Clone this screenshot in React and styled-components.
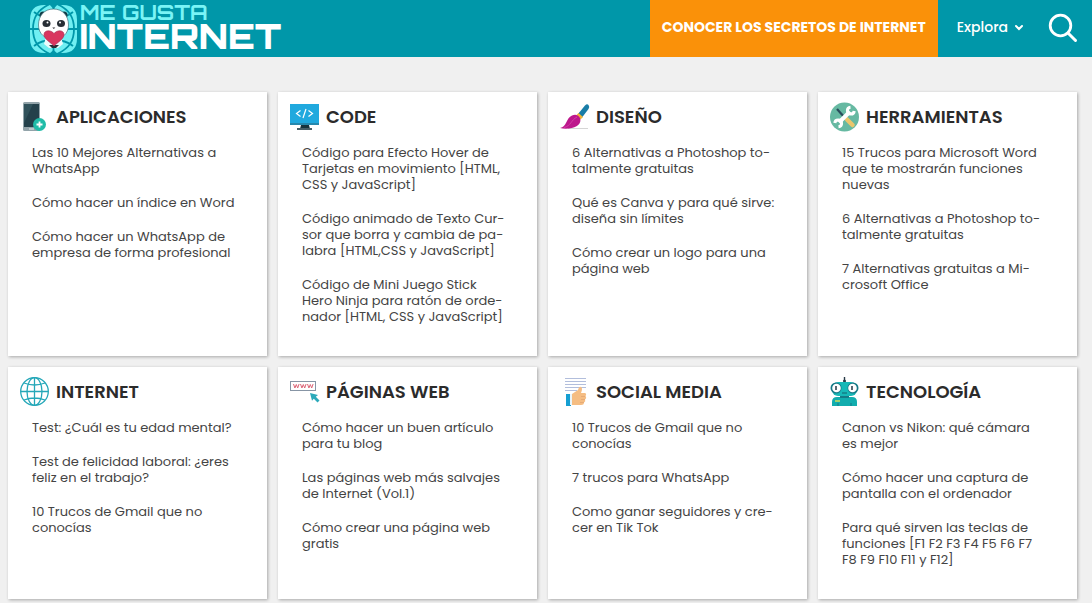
import React from 'react';
import styled, { createGlobalStyle } from 'styled-components';

const GlobalStyle = createGlobalStyle`
    body {
        margin: 0;
        background-color: #f0f0f0;
        color: #333333;
        font-family: Poppins, Inter, "Open Sans", sans-serif;
    }
`;

const Header = styled.header`
    display: flex;
    align-items: stretch;
    min-height: 57px;
    background-color: #0097a9;
`;

const Logo = styled.a`
    display: flex;
    align-items: center;
    gap: 2px;
    margin-right: auto;
    padding-left: 29px;
    text-decoration: none;
`;

const LogoText = styled.span`
    display: flex;
    flex-direction: column;
    padding-bottom: 6px;
    font-family: Orbitron, "DejaVu Sans", sans-serif;
`;

const LogoTop = styled.span`
    color: #7af4f6;
    font-size: 21px;
    font-weight: 700;
    line-height: 20px;
`;

const LogoBottom = styled.span`
    color: white;
    font-size: 35px;
    font-weight: 900;
    line-height: 28px;
`;

const Nav = styled.nav`
    display: flex;
    align-items: stretch;
`;

const PromoLink = styled.a`
    display: flex;
    align-items: center;
    padding: 0 12px 2px;
    background-color: #fa9109;
    color: white;
    font-size: 14px;
    font-weight: 700;
    text-decoration: none;
    white-space: nowrap;
`;

const MenuButton = styled.button`
    display: flex;
    align-items: center;
    gap: 6px;
    padding: 0 18px 2px 19px;
    border: none;
    background: none;
    color: white;
    font-family: inherit;
    font-size: 14px;
    font-weight: 500;
    cursor: pointer;
`;

const SearchButton = styled.button`
    display: flex;
    align-items: center;
    padding: 0 14px 2px 6px;
    border: none;
    background: none;
    cursor: pointer;
`;

const Grid = styled.main`
    display: grid;
    grid-template-columns: repeat(4, minmax(0, 1fr));
    gap: 11px;
    padding: 35px 15px 4px 8px;
`;

const Card = styled.section`
    box-sizing: border-box;
    padding: 9px 12px 31px;
    background-color: white;
    box-shadow: 1px 1px 3px rgba(0, 0, 0, 0.3);
`;

const CardHeader = styled.div`
    display: flex;
    align-items: center;
    gap: 6px;
    height: 32px;
`;

const CardTitle = styled.h2`
    margin: 0;
    color: #2b2b2b;
    font-size: 18px;
    font-weight: 600;
    line-height: 24px;
`;

const LinkList = styled.ul`
    display: flex;
    flex-direction: column;
    gap: 18px;
    margin: 12px 0 0;
    padding: 0 0 0 12px;
    list-style: none;
`;

const ListLink = styled.a`
    display: block;
    color: #444444;
    font-size: 13px;
    font-weight: 400;
    line-height: 16px;
    text-decoration: none;
    white-space: pre-line;
`;

const PandaLogo = () => (
    <svg width="49" height="50" viewBox="0 0 49 50" aria-hidden="true">
        <path d="M15 1H34Q48 1 48 16V34Q48 49 34 49H15Q1 49 1 34V16Q1 1 15 1Z" fill="#70eff2" />
        <g fill="none" stroke="#0097a9" strokeWidth="1.8">
            <path d="M21 0C8 6 4 14 4 25S8 44 21 50M28 0C41 6 45 14 45 25S41 44 28 50" />
            <path d="M5 8Q12 14 24.5 14T44 8M5 42Q12 36 24.5 36T44 42M0 25h49M24.5 0v50" />
        </g>
        <path d="M20 0h9l-4.5 5zM20 50h9l-4.5-4z" fill="#0097a9" />
        <circle cx="14" cy="11" r="3.5" fill="#123c46" />
        <circle cx="35" cy="11" r="3.5" fill="#123c46" />
        <path d="M24.5 5C34 5 39.5 12 39.5 21C39.5 30 33 35 24.5 35C16 35 9.5 30 9.5 21C9.5 12 15 5 24.5 5Z" fill="white" stroke="#416e78" strokeWidth=".7" />
        <path d="M17 33h15l2 7-5 4h-9l-5-4z" fill="#e9fbfc" />
        <ellipse cx="17.5" cy="19.5" rx="4" ry="3.5" fill="#272e35" />
        <ellipse cx="32" cy="19.5" rx="4" ry="3.5" fill="#272e35" />
        <circle cx="18.5" cy="18.5" r="1" fill="white" />
        <circle cx="31" cy="18.5" r="1" fill="white" />
        <path d="M23.3 23.5h3l-1.5 1.6z" fill="#34343a" />
        <path d="M20 41l3 3h4l3-3z" fill="#272e35" />
        <path d="M25 42C21 38 15 35 15 30.5C15 26 22 25.5 25 29.5C28 25.5 35 26 35 30.5C35 35 29 38 25 42Z" fill="#d9365f" stroke="#a52d53" strokeWidth=".6" />
    </svg>
);

const PhoneIcon = () => (
    <>
        <rect x="3" y="1" width="17" height="29" rx="1.5" fill="#93a4aa" />
        <rect x="4" y="3" width="15" height="23" fill="#24414b" />
        <path d="M4 3h9l-9 19z" fill="#31525b" />
        <path d="M9 28h5" stroke="#e5eded" />
        <circle cx="19.5" cy="23.5" r="6.5" fill="#20bca8" />
        <path d="M19.5 20.5v6M16.5 23.5h6" stroke="white" strokeWidth="1.8" />
    </>
);

const CodeIcon = () => (
    <>
        <path d="M11 24h8l1 4h-10z" fill="#16333d" />
        <path d="M7 27h15v2H7z" fill="#485f67" />
        <rect x="0" y="3" width="29" height="21" fill="#20a9de" />
        <path d="M0 22h29v2H0z" fill="#2688ad" />
        <path d="M10.5 9.5l-4 3 4 3M18.5 9.5l4 3-4 3M16 8l-3 9" fill="none" stroke="white" strokeWidth="1.2" />
    </>
);

const BrushIcon = () => (
    <>
        <path d="M8 27.5h20" stroke="#d5d5d5" />
        <path d="M18 13L25 4.5Q27 2.5 28.5 4Q30 6 28.5 8L22 16.5Z" fill="#197da7" />
        <path d="M16.5 14l2-2 4.5 4-2.5 2.5z" fill="#efb535" />
        <path d="M0 27C7 26 6 17 12 14.5C15 13 18 13.5 20 17C22 22 17 27 9 27.5Q4 28 0 27Z" fill="#bd178c" />
        <path d="M4 26.5C11 25 11 19 17 16" fill="none" stroke="#d33ca5" />
    </>
);

const ToolsIcon = () => (
    <>
        <circle cx="14.5" cy="16" r="14.5" fill="#66b9a2" />
        <path d="M7 8l8 9" stroke="#294c5c" strokeWidth="2.2" />
        <path d="M17 18.5l5.5 5.5" stroke="#eac66d" strokeWidth="4.5" strokeLinecap="round" />
        <path d="M9 21.5L20 10.5" stroke="white" strokeWidth="4" />
        <path d="M20.5 6.3A3.4 3.4 0 1 0 24.2 10M4.8 22A3.4 3.4 0 1 1 8.5 25.7" fill="none" stroke="white" strokeWidth="3" />
    </>
);

const GlobeIcon = () => (
    <g fill="none" stroke="#24a7b8" strokeWidth="1.3">
        <circle cx="14.5" cy="15.5" r="13.8" />
        <ellipse cx="14.5" cy="15.5" rx="7.5" ry="13.8" />
        <path d="M14.5 1.7v27.6M.7 15.5h27.6M4 7Q14.5 11 25 7M4 24Q14.5 20 25 24" />
    </g>
);

const WwwIcon = () => (
    <>
        <rect x=".5" y="5.5" width="25" height="9" fill="white" stroke="#8795a5" />
        <path d="M3.5 8l1.4 4 1.4-3.5L7.7 12l1.4-4M10.5 8l1.4 4 1.4-3.5 1.4 3.5 1.4-4M17.5 8l1.4 4 1.4-3.5 1.4 3.5 1.4-4" fill="none" stroke="#dc6577" />
        <path d="M20 17l8 2-2.2 1.8 3.7 3.7-2 2-3.7-3.7-1.8 2z" fill="#2ba9ba" />
    </>
);

const LikeIcon = () => (
    <>
        <g stroke="#b2bedc" strokeWidth="1.2">
            <path d="M5 2.5h21M5 5.5h21M5 8.5h21M5 11.5h21M5 14.5h12" />
        </g>
        <path d="M6 18h5v12H6z" fill="#159fd2" />
        <path d="M10 18h2v11h-2z" fill="#e9f5fb" />
        <path d="M12 18L18 14Q19 10 21 11Q23 12 21 17H25Q27 18 25.5 20Q27 22 25 23.5Q26 25.5 24 26.5Q24 29 21 29H12Z" fill="#f5bd83" />
        <path d="M21 20.5h4M21 23.5h4M20 26.5h4" stroke="#dda06d" strokeWidth=".6" />
    </>
);

const RobotIcon = () => (
    <>
        <path d="M14.5 1v6" stroke="#273946" strokeWidth="1.4" />
        <circle cx="14.5" cy="5" r="1.5" fill="#273946" />
        <path d="M2 30v-4Q2 21 7 21H22Q27 21 27 26v4z" fill="#12adae" />
        <path d="M10 18h9v4h-9z" fill="#147b86" />
        <rect x="2" y="6" width="25" height="14" rx="6" fill="#17b8b7" />
        <g fill="#167886">
            <circle cx="6" cy="12" r="5.5" />
            <circle cx="23" cy="12" r="5.5" />
        </g>
        <g fill="white">
            <circle cx="6.5" cy="12" r="4.3" />
            <circle cx="22.5" cy="12" r="4.3" />
        </g>
        <path d="M6 10v4M22 10v4" stroke="#253745" strokeWidth="1.5" />
        <path d="M12 17h5" stroke="#126571" />
        <path d="M5 25h5" stroke="#cfdf58" strokeWidth="1.5" />
        <path d="M8 27v3M21 27v3" stroke="#167886" />
    </>
);

const categories = [
    {
        title: 'APLICACIONES',
        Icon: PhoneIcon,
        links: [
            'Las 10 Mejores Alternativas a\nWhatsApp',
            'Cómo hacer un índice en Word',
            'Cómo hacer un WhatsApp de\nempresa de forma profesional'
        ]
    },
    {
        title: 'CODE',
        Icon: CodeIcon,
        links: [
            'Código para Efecto Hover de\nTarjetas en movimiento [HTML,\nCSS y JavaScript]',
            'Código animado de Texto Cur-\nsor que borra y cambia de pa-\nlabra [HTML,CSS y JavaScript]',
            'Código de Mini Juego Stick\nHero Ninja para ratón de orde-\nnador [HTML, CSS y JavaScript]'
        ]
    },
    {
        title: 'DISEÑO',
        Icon: BrushIcon,
        links: [
            '6 Alternativas a Photoshop to-\ntalmente gratuitas',
            'Qué es Canva y para qué sirve:\ndiseña sin límites',
            'Cómo crear un logo para una\npágina web'
        ]
    },
    {
        title: 'HERRAMIENTAS',
        Icon: ToolsIcon,
        links: [
            '15 Trucos para Microsoft Word\nque te mostrarán funciones\nnuevas',
            '6 Alternativas a Photoshop to-\ntalmente gratuitas',
            '7 Alternativas gratuitas a Mi-\ncrosoft Office'
        ]
    },
    {
        title: 'INTERNET',
        Icon: GlobeIcon,
        links: [
            'Test: ¿Cuál es tu edad mental?',
            'Test de felicidad laboral: ¿eres\nfeliz en el trabajo?',
            '10 Trucos de Gmail que no\nconocías'
        ]
    },
    {
        title: 'PÁGINAS WEB',
        Icon: WwwIcon,
        links: [
            'Cómo hacer un buen artículo\npara tu blog',
            'Las páginas web más salvajes\nde Internet (Vol.1)',
            'Cómo crear una página web\ngratis'
        ]
    },
    {
        title: 'SOCIAL MEDIA',
        Icon: LikeIcon,
        links: [
            '10 Trucos de Gmail que no\nconocías',
            '7 trucos para WhatsApp',
            'Como ganar seguidores y cre-\ncer en Tik Tok'
        ]
    },
    {
        title: 'TECNOLOGÍA',
        Icon: RobotIcon,
        links: [
            'Canon vs Nikon: qué cámara\nes mejor',
            'Cómo hacer una captura de\npantalla con el ordenador',
            'Para qué sirven las teclas de\nfunciones [F1 F2 F3 F4 F5 F6 F7\nF8 F9 F10 F11 y F12]'
        ]
    }
];

const CategoryCard = ({ title, Icon, links }) => {
    return (
        <Card>
            <CardHeader>
                <svg width="30" height="32" viewBox="0 0 30 32" aria-hidden="true"><Icon /></svg>
                <CardTitle>{title}</CardTitle>
            </CardHeader>
            <LinkList>
                {links.map(link => (
                    <li key={link}><ListLink href="#">{link}</ListLink></li>
                ))}
            </LinkList>
        </Card>
    )
}

const App = () => {
    return (
        <>
            <GlobalStyle />
            <Header>
                <Logo href="#">
                    <PandaLogo />
                    <LogoText>
                        <LogoTop>ME GUSTA</LogoTop>
                        <LogoBottom>INTERNET</LogoBottom>
                    </LogoText>
                </Logo>
                <Nav>
                    <PromoLink href="#">CONOCER LOS SECRETOS DE INTERNET</PromoLink>
                    <MenuButton type="button">
                        Explora
                        <svg width="10" height="8" viewBox="0 0 10 8" aria-hidden="true">
                            <path d="M2 2l3 3 3-3" fill="none" stroke="white" strokeWidth="2" strokeLinecap="round" />
                        </svg>
                    </MenuButton>
                    <SearchButton type="button" aria-label="Buscar">
                        <svg width="30" height="30" viewBox="0 0 30 30" aria-hidden="true">
                            <circle cx="12.5" cy="12.5" r="10.3" fill="none" stroke="white" strokeWidth="2.8" />
                            <path d="M20 20l7.5 7.5" stroke="white" strokeWidth="3" strokeLinecap="round" />
                        </svg>
                    </SearchButton>
                </Nav>
            </Header>
            <Grid>
                {categories.map(category => <CategoryCard key={category.title} {...category} />)}
            </Grid>
        </>
    )
}

export default App;
